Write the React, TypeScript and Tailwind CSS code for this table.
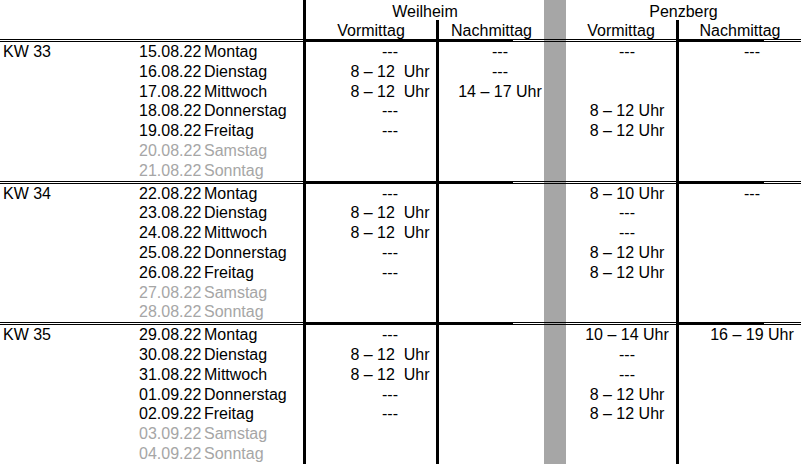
type Day = {
  date: string;
  name: string;
  weekend?: boolean;
  wv?: string;
  wn?: string;
  pv?: string;
  pn?: string;
};

type Week = { kw: string; days: Day[] };

const W = "8 – 12  Uhr";
const P = "8 – 12 Uhr";
const D = "---";

const weeks: Week[] = [
  {
    kw: "KW 33",
    days: [
      { date: "15.08.22", name: "Montag", wv: D, wn: D, pv: D, pn: D },
      { date: "16.08.22", name: "Dienstag", wv: W, wn: D },
      { date: "17.08.22", name: "Mittwoch", wv: W, wn: "14 – 17 Uhr" },
      { date: "18.08.22", name: "Donnerstag", wv: D, pv: P },
      { date: "19.08.22", name: "Freitag", wv: D, pv: P },
      { date: "20.08.22", name: "Samstag", weekend: true },
      { date: "21.08.22", name: "Sonntag", weekend: true },
    ],
  },
  {
    kw: "KW 34",
    days: [
      { date: "22.08.22", name: "Montag", wv: D, pv: "8 – 10 Uhr", pn: D },
      { date: "23.08.22", name: "Dienstag", wv: W, pv: D },
      { date: "24.08.22", name: "Mittwoch", wv: W, pv: D },
      { date: "25.08.22", name: "Donnerstag", wv: D, pv: P },
      { date: "26.08.22", name: "Freitag", wv: D, pv: P },
      { date: "27.08.22", name: "Samstag", weekend: true },
      { date: "28.08.22", name: "Sonntag", weekend: true },
    ],
  },
  {
    kw: "KW 35",
    days: [
      { date: "29.08.22", name: "Montag", wv: D, pv: "10 – 14 Uhr", pn: "16 – 19 Uhr" },
      { date: "30.08.22", name: "Dienstag", wv: W, pv: D },
      { date: "31.08.22", name: "Mittwoch", wv: W, pv: D },
      { date: "01.09.22", name: "Donnerstag", wv: D, pv: P },
      { date: "02.09.22", name: "Freitag", wv: D, pv: P },
      { date: "03.09.22", name: "Samstag", weekend: true },
      { date: "04.09.22", name: "Sonntag", weekend: true },
    ],
  },
];

const line = "bg-black";
const gray = "bg-[#a6a6a6]";
const dbl = "h-[3px] border-y border-black";

function Separator() {
  return (
    <>
      <div className={dbl} />
      <div className={dbl} />
      <div className={line} />
      <div className={line} />
      <div className={line} />
      <div className="flex h-[3px]">
        <div className="w-[74px] bg-black" />
        <div className={"flex-1 " + dbl} />
      </div>
      <div className={dbl + " " + gray} />
      <div className={dbl} />
      <div className={line} />
      <div className="flex h-[3px]">
        <div className="w-[85px] bg-black" />
        <div className={"flex-1 " + dbl} />
      </div>
    </>
  );
}

function DayRow({ kw, day }: { kw?: string; day: Day }) {
  const cell = "h-[19.8px] leading-[19.8px] whitespace-pre";
  return (
    <>
      <div className={cell + " pl-[3px]"}>{kw}</div>
      <div className={cell + " flex " + (day.weekend ? "text-[#a6a6a6]" : "")}>
        <span className="w-[65px]">{day.date}</span>
        <span>{day.name}</span>
      </div>
      <div className={line} />
      <div className={cell + " pl-[38px] text-center"}>{day.wv}</div>
      <div className={line} />
      <div className={cell + " pl-[17px] text-center"}>{day.wn}</div>
      <div className={gray} />
      <div className={cell + " pl-[12px] text-center"}>{day.pv}</div>
      <div className={line} />
      <div className={cell + " pl-[24px] text-center"}>{day.pn}</div>
    </>
  );
}

export default function App() {
  return (
    <div className="w-[801px] h-[466px] overflow-hidden bg-white text-black text-[16px] font-['Liberation_Sans',Arial,sans-serif]">
      <div className="grid w-[801px] grid-cols-[139px_164px_3px_130px_3px_105px_22px_110px_3px_122px]">
        {/* header: locations */}
        <div className="col-span-2 h-[20px]" />
        <div className={line} />
        <div className="col-span-3 h-[20px] pt-[3px] leading-[18px] text-center">Weilheim</div>
        <div className={gray} />
        <div className="col-span-3 h-[20px] pt-[3px] leading-[18px] text-center">Penzberg</div>

        {/* header: times of day */}
        <div className="col-span-2 h-[19px]" />
        <div className={line} />
        <div className="h-[19px] pt-[2px] leading-[18px] text-center">Vormittag</div>
        <div className={line} />
        <div className="h-[19px] pt-[2px] leading-[18px] text-center">Nachmittag</div>
        <div className={gray} />
        <div className="h-[19px] pt-[2px] leading-[18px] text-center">Vormittag</div>
        <div className={line} />
        <div className="h-[19px] pt-[2px] leading-[18px] text-center">Nachmittag</div>

        {weeks.map((week) => (
          <Week key={week.kw} week={week} />
        ))}
      </div>
    </div>
  );
}

function Week({ week }: { week: Week }) {
  return (
    <>
      <Separator />
      {week.days.map((day, i) => (
        <DayRow key={day.date} kw={i === 0 ? week.kw : undefined} day={day} />
      ))}
    </>
  );
}
